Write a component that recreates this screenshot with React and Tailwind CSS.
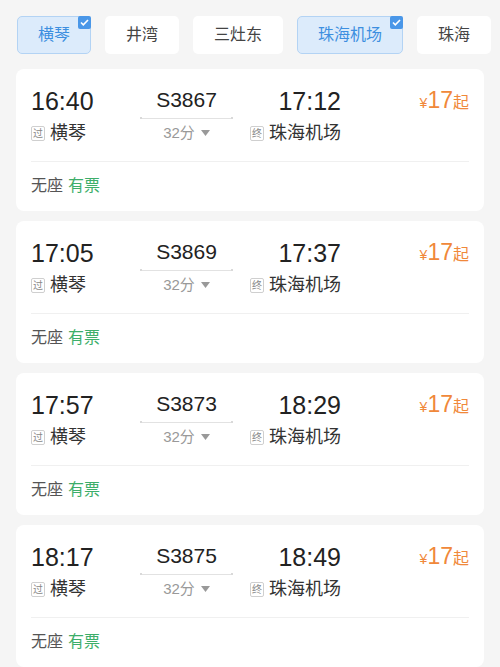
import React from 'react';

const stations = [
    { name: '横琴', checked: true },
    { name: '井湾' },
    { name: '三灶东' },
    { name: '珠海机场', checked: true },
    { name: '珠海' },
];

const trains = [
    { dep: '16:40', arr: '17:12', no: 'S3867' },
    { dep: '17:05', arr: '17:37', no: 'S3869' },
    { dep: '17:57', arr: '18:29', no: 'S3873' },
    { dep: '18:17', arr: '18:49', no: 'S3875' },
];

function Tag({ children }) {
    return (
        <span className="w-[14px] h-[15px] border border-[#cfcfcf] rounded-[2px] text-[10px] leading-[13px] text-[#888] flex items-center justify-center shrink-0">
            {children}
        </span>
    );
}

function TrainCard({ t }) {
    return (
        <div className="bg-white rounded-lg px-[15px] pt-[17px] pb-[13px]">
            <div className="flex">
                {/* 出发 */}
                <div className="w-[109px] flex flex-col">
                    <div className="text-[25px] leading-[30px] text-[#222]">{t.dep}</div>
                    <div className="flex items-center gap-[5px] mt-[5px] h-[24px]">
                        <Tag>过</Tag>
                        <span className="text-[18px] leading-[24px] text-[#333]">横琴</span>
                    </div>
                </div>

                {/* 车次 */}
                <div className="w-[93px] flex flex-col items-center">
                    <div className="text-[21px] leading-[26px] text-[#222] mt-[1px]">{t.no}</div>
                    <div className="w-full flex items-center mt-[4px]">
                        <span className="w-[2px] h-[2px] rounded-full bg-[#ccc]"></span>
                        <span className="flex-1 h-px bg-[#e2e2e2]"></span>
                        <span className="w-[2px] h-[2px] rounded-full bg-[#ccc]"></span>
                    </div>
                    <div className="flex items-center gap-[6px] mt-[4px] text-[15px] leading-[20px] text-[#999]">
                        <span>32分</span>
                        <svg width="9" height="6" viewBox="0 0 9 6">
                            <path d="M0 0h9L4.5 6z" fill="#999" />
                        </svg>
                    </div>
                </div>

                {/* 到达 */}
                <div className="w-[94px] ml-[14px] flex flex-col items-end">
                    <div className="text-[25px] leading-[30px] text-[#222]">{t.arr}</div>
                    <div className="flex items-center gap-[5px] mt-[5px] h-[24px]">
                        <Tag>终</Tag>
                        <span className="text-[18px] leading-[24px] text-[#333]">珠海机场</span>
                    </div>
                </div>

                {/* 价格 */}
                <div className="flex-1 flex justify-end">
                    <div className="flex items-baseline text-[#f0883a] mt-[1px] h-[26px]">
                        <span className="text-[14px]">¥</span>
                        <span className="text-[23px] leading-[26px]">17</span>
                        <span className="text-[16px]">起</span>
                    </div>
                </div>
            </div>

            <div className="h-px bg-[#f0f0f0] mt-[16px]"></div>

            <div className="pt-[12px] text-[16px] leading-[24px]">
                <span className="text-[#555]">无座</span>
                <span className="text-[#3dae6a] ml-[5px]">有票</span>
            </div>
        </div>
    );
}

export default function App() {
    return (
        <div
            className="w-[500px] h-[667px] overflow-hidden bg-[#f5f5f5]"
            style={{ fontFamily: '"Liberation Sans", "Noto Sans CJK SC", sans-serif' }}
        >
            {/* 站点筛选 */}
            <div className="flex gap-[14px] pl-[17px] pt-[16px] overflow-hidden">
                {stations.map(s => (
                    <div
                        key={s.name}
                        className={
                            s.checked
                                ? 'relative shrink-0 h-[38px] px-[20px] rounded-[5px] flex items-center bg-[#dcebfb] border border-[#b3d3f4] text-[#3d8fe0] text-[16px]'
                                : 'relative shrink-0 h-[38px] px-[21px] rounded-[5px] flex items-center bg-white text-[#444] text-[16px]'
                        }
                    >
                        {s.name}
                        {s.checked && (
                            <span className="absolute -top-px -right-px w-[13px] h-[13px] rounded-[2px] bg-[#4a97e8] flex items-center justify-center">
                                <svg width="9" height="7" viewBox="0 0 9 7">
                                    <path d="M1 3.5l2.3 2.3L8 1" stroke="#fff" strokeWidth="1.6" fill="none" />
                                </svg>
                            </span>
                        )}
                    </div>
                ))}
            </div>

            {/* 车次列表 */}
            <div className="flex flex-col gap-[10px] px-[16px] mt-[15px]">
                {trains.map(t => (
                    <TrainCard key={t.no} t={t} />
                ))}
            </div>
        </div>
    );
}
